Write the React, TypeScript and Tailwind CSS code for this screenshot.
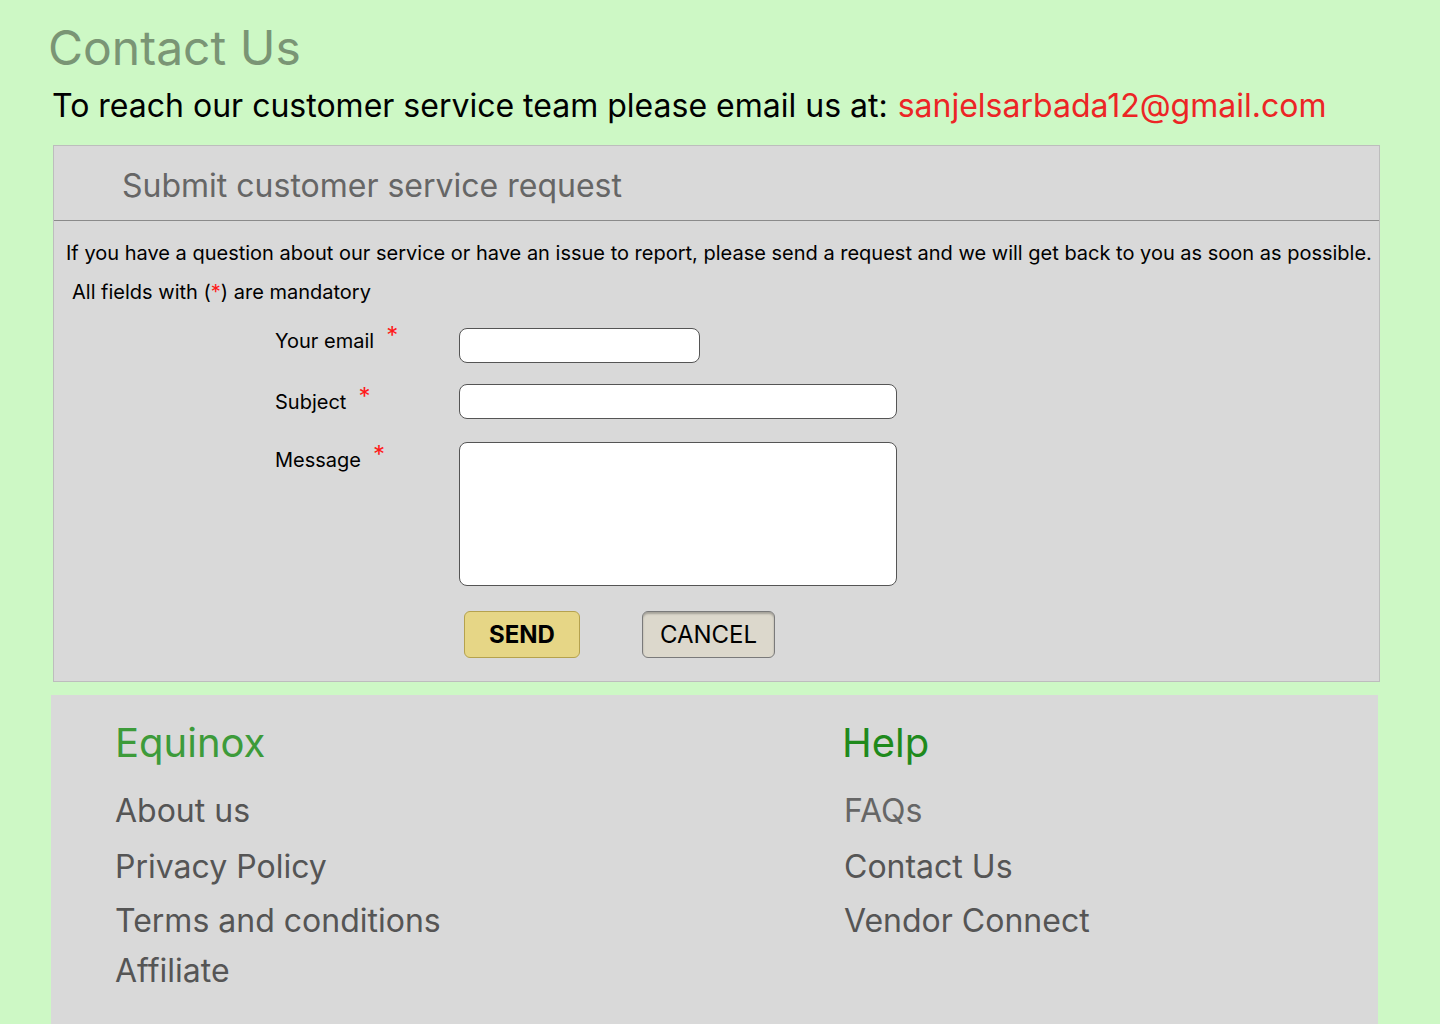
import React from "react";

const Star = () => (
  <span className="inline-block align-top text-[24px] leading-none text-[#ff1a1a] relative -top-[5px] ml-[12px]">*</span>
);

export default function App() {
  return (
    <div className="min-h-screen w-full bg-[#cdf8c5] font-['Inter','Noto_Sans',sans-serif] overflow-hidden">
      <div className="pl-[48px] pt-[20px]">
        <h1 className="text-[48px] leading-[56px] text-[#7a9575]">Contact Us</h1>
        <p className="mt-[10px] ml-[4px] flex items-baseline gap-[10px] text-[32px] leading-[40px] text-black">
          <span>To reach our customer service team please email us at:</span>
          <span className="text-[#ec2525]">sanjelsarbada12@gmail.com</span>
        </p>
      </div>

      <div className="mt-[19px] ml-[53px] w-[1327px] h-[537px] bg-[#d9d9d9] border border-[#bdbdbd]">
        <div className="h-[75px] border-b border-[#8a8a8a] pl-[68px] pt-[5px] flex items-center">
          <h2 className="text-[32px] text-[#666666]">Submit customer service request</h2>
        </div>
        <p className="mt-[20px] ml-[12px] text-[20px] leading-[24px] text-black">
          If you have a question about our service or have an issue to report, please send a request and we will get back to you as soon as possible.
        </p>
        <p className="mt-[15px] ml-[18px] text-[20px] leading-[24px] text-black">
          All fields with (<span className="text-[#ff1a1a]">*</span>) are mandatory
        </p>

        <div className="mt-[24px] ml-[221px] flex flex-col">
          <div className="flex items-start">
            <label className="w-[184px] pt-[1px] text-[20px] leading-[24px] text-black">
              Your email<Star />
            </label>
            <input className="w-[241px] h-[35px] bg-white border border-[#555] rounded-[8px]" />
          </div>
          <div className="flex items-start mt-[21px]">
            <label className="w-[184px] pt-[6px] text-[20px] leading-[24px] text-black">
              Subject<Star />
            </label>
            <input className="w-[438px] h-[35px] bg-white border border-[#555] rounded-[8px]" />
          </div>
          <div className="flex items-start mt-[23px]">
            <label className="w-[184px] pt-[6px] text-[20px] leading-[24px] text-black">
              Message<Star />
            </label>
            <textarea className="w-[438px] h-[144px] bg-white border border-[#555] rounded-[8px] resize-none" />
          </div>
          <div className="flex mt-[25px] ml-[189px] gap-[62px]">
            <button className="w-[116px] h-[47px] bg-[#e6d686] border border-[#b5a24e] rounded-[6px] text-[24px] font-bold text-black">
              SEND
            </button>
            <button className="w-[133px] h-[47px] bg-[#dcd8cc] border border-[#7a7a7a] rounded-[6px] text-[24px] text-black shadow-[inset_0_2px_2px_rgba(0,0,0,0.25)]">
              CANCEL
            </button>
          </div>
        </div>
      </div>

      <footer className="mt-[13px] ml-[51px] w-[1327px] h-[340px] bg-[#d9d9d9] grid grid-cols-[727px_1fr] pt-[22px]">
        <div className="pl-[64px]">
          <h3 className="text-[40px] leading-[52px] text-[#3d9b3a]">Equinox</h3>
          <ul className="mt-[14px] flex flex-col text-[32px] text-[#555555]">
            <li className="h-[56px] leading-[56px]">About us</li>
            <li className="h-[54px] leading-[56px]">Privacy Policy</li>
            <li className="h-[50px] leading-[56px]">Terms and conditions</li>
            <li className="h-[50px] leading-[56px]">Affiliate</li>
          </ul>
        </div>
        <div className="pl-[66px]">
          <h3 className="text-[40px] leading-[52px] text-[#1f8a1c] -ml-[2px]">Help</h3>
          <ul className="mt-[14px] flex flex-col text-[32px] text-[#555555]">
            <li className="h-[56px] leading-[56px] text-[#666]">FAQs</li>
            <li className="h-[54px] leading-[56px]">Contact Us</li>
            <li className="h-[50px] leading-[56px]">Vendor Connect</li>
          </ul>
        </div>
      </footer>
    </div>
  );
}
